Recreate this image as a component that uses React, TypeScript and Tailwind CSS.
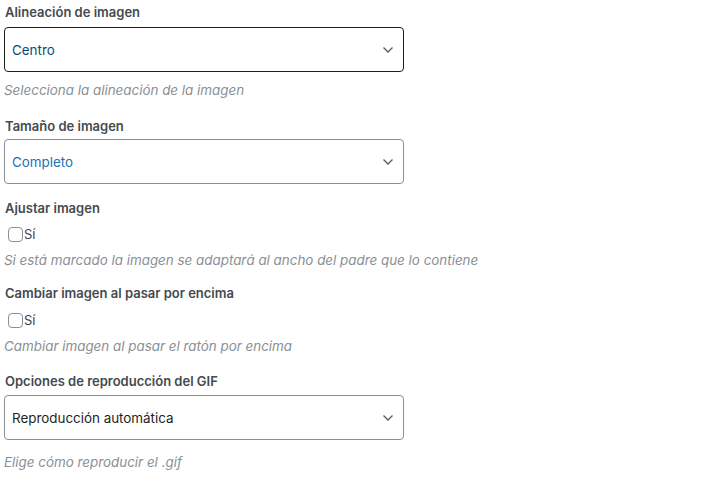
import React from 'react';

const font = { fontFamily: 'Inter, "Noto Sans", sans-serif' };

const Chevron = () => (
  <svg width="12" height="8" viewBox="0 0 12 8" fill="none" className="shrink-0">
    <path d="M1.5 1.5 L6 6 L10.5 1.5" stroke="#555d66" strokeWidth="1.4" fill="none" />
  </svg>
);

interface SelectProps {
  value: string;
  color: string;
  focused?: boolean;
  className?: string;
}

const SelectBox: React.FC<SelectProps> = ({ value, color, focused, className }) => (
  <div
    className={`ml-[4px] w-[400px] h-[45px] rounded-[4px] bg-white flex items-center justify-between pl-[7px] pr-[9px] ${
      focused ? 'border-[1.5px] border-[#1e1e1e]' : 'border border-[#8c8f94]'
    } ${className ?? ''}`}
  >
    <span className={`text-[13.4px] leading-[18px] ${color}`}>{value}</span>
    <Chevron />
  </div>
);

const Label: React.FC<{ text: string; className?: string }> = ({ text, className }) => (
  <div className={`pl-[5px] text-[13px] leading-[18px] font-semibold text-[#454a4f] ${className ?? ''}`}>{text}</div>
);

const Help: React.FC<{ text: string; className?: string }> = ({ text, className }) => (
  <div className={`pl-[4px] text-[13.4px] leading-[18px] italic text-[#8a8f94] ${className ?? ''}`}>{text}</div>
);

const CheckRow: React.FC<{ className?: string }> = ({ className }) => (
  <div className={`pl-[8px] flex items-center h-[18px] ${className ?? ''}`}>
    <span className="w-[15px] h-[15px] rounded-[4px] border border-[#8c8f94] bg-white" />
    <span className="ml-[1px] text-[13px] leading-[18px] text-[#3c434a]">Sí</span>
  </div>
);

export default function App() {
  return (
    <div className="w-[708px] h-[482px] bg-white flex flex-col pt-[3px]" style={font}>
      <Label text="Alineación de imagen" />
      <SelectBox value="Centro" color="text-[#0a4b78]" focused className="mt-[6px]" />
      <Help text="Selecciona la alineación de la imagen" className="mt-[9px]" />

      <Label text="Tamaño de imagen" className="mt-[18px]" />
      <SelectBox value="Completo" color="text-[#2271b1]" className="mt-[4px]" />

      <Label text="Ajustar imagen" className="mt-[15px]" />
      <CheckRow className="mt-[8px]" />
      <Help text="Si está marcado la imagen se adaptará al ancho del padre que lo contiene" className="mt-[8px]" />

      <Label text="Cambiar imagen al pasar por encima" className="mt-[15px]" />
      <CheckRow className="mt-[9px]" />
      <Help text="Cambiar imagen al pasar el ratón por encima" className="mt-[8px]" />

      <Label text="Opciones de reproducción del GIF" className="mt-[17px]" />
      <SelectBox value="Reproducción automática" color="text-[#1e1e1e]" className="mt-[5px] h-[44px]" />
      <Help text="Elige cómo reproducir el .gif" className="mt-[13px]" />
    </div>
  );
}
